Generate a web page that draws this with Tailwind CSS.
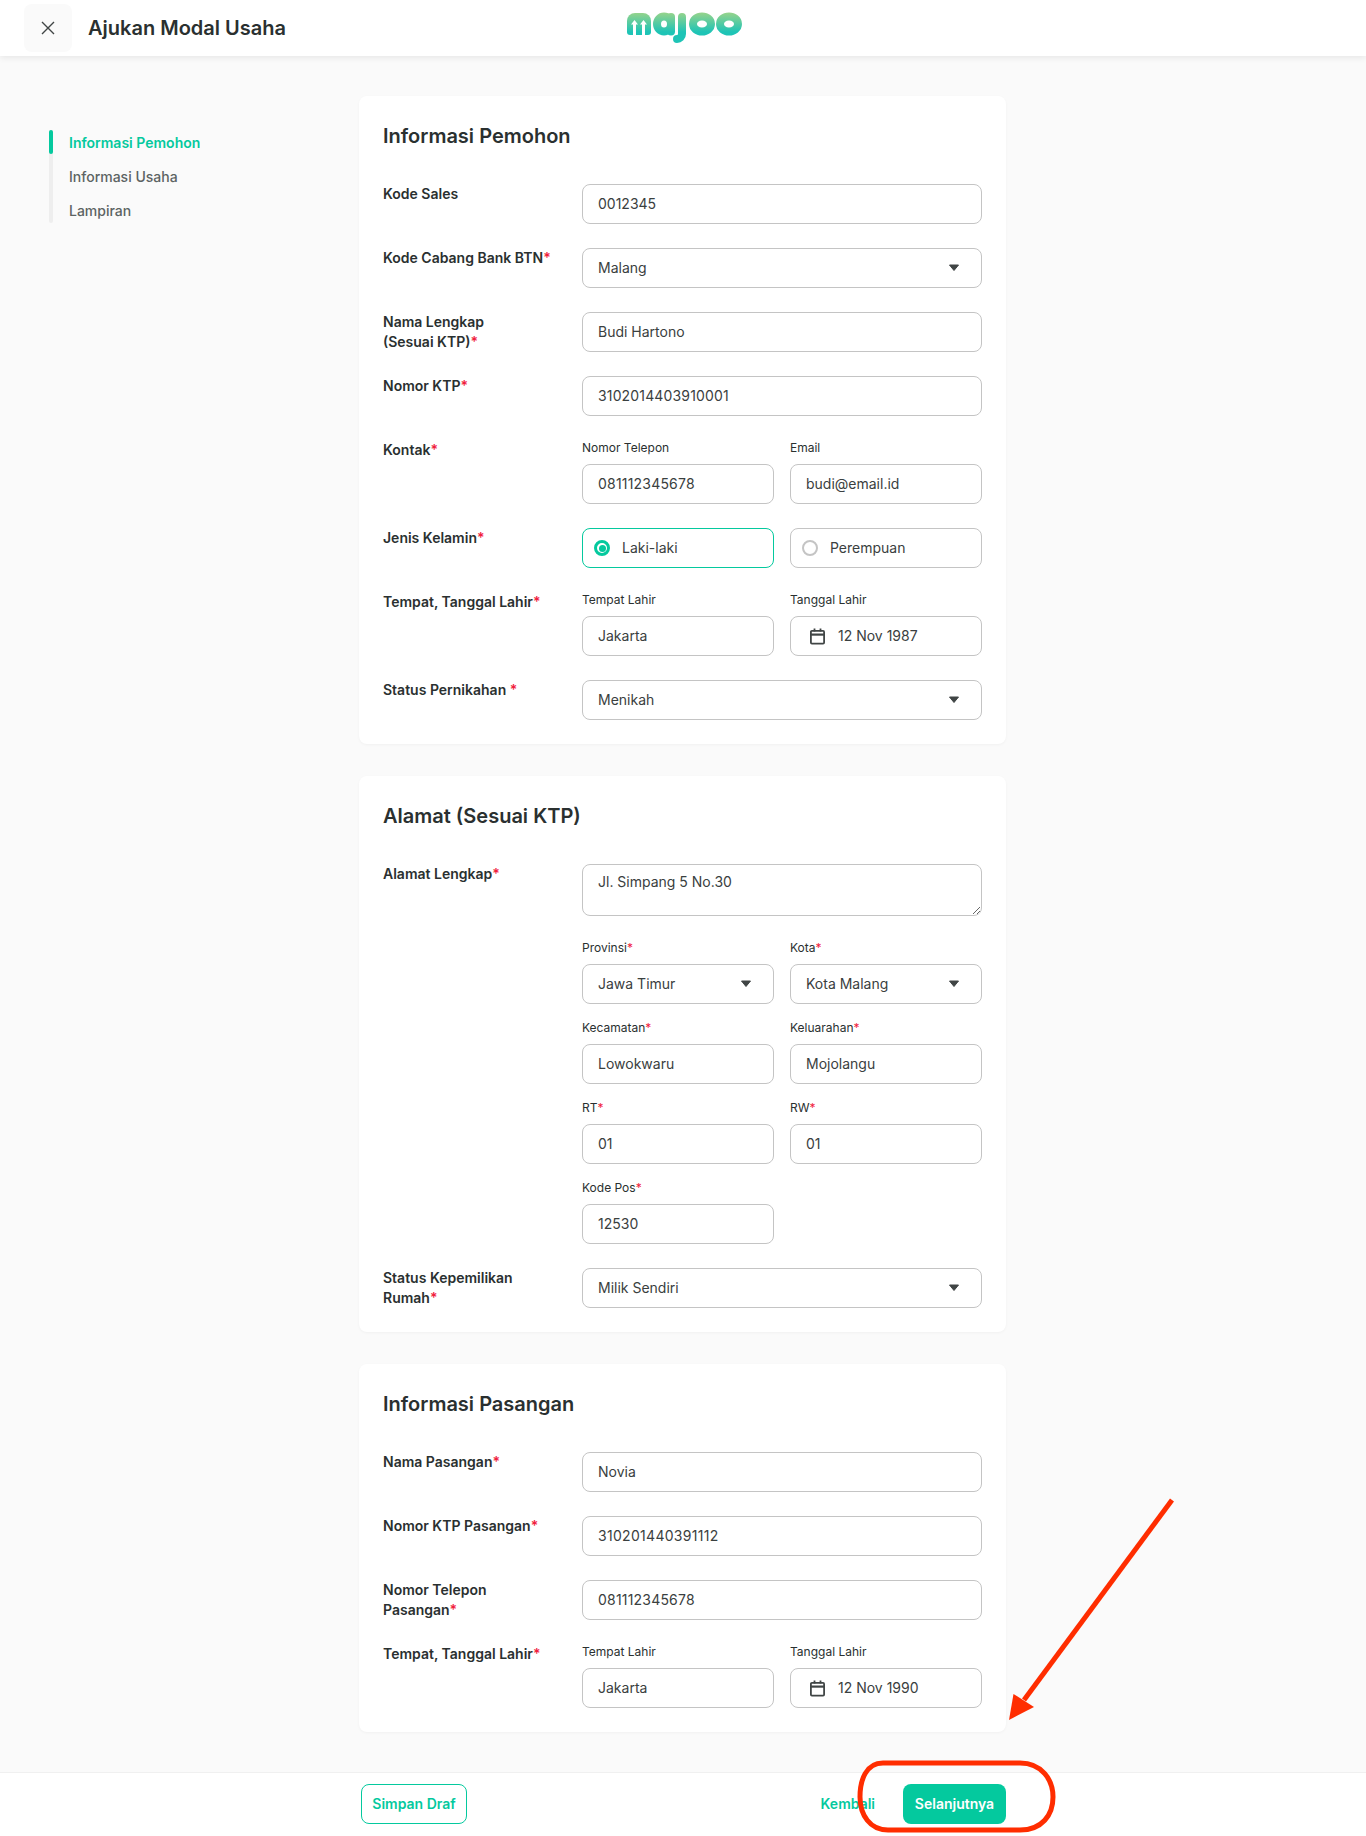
<!DOCTYPE html>
<html lang="id">
<head>
  <meta charset="UTF-8">
  <meta name="viewport" content="width=device-width, initial-scale=1.0">
  <title>Ajukan Modal Usaha</title>
  <script src="https://cdn.jsdelivr.net/npm/@tailwindcss/browser@4"></script>
</head>
<body class="relative bg-[#fafafa] text-[#2a3030] [font-family:Inter,sans-serif]">

  <header class="h-14 bg-white shadow-[0_2px_6px_rgba(0,0,0,0.08)] flex">
    <div class="w-[626px] shrink-0 pl-6 pt-1 flex items-start gap-4">
      <button class="w-12 h-12 rounded-lg bg-[#fafafa] flex items-center justify-center">
        <svg width="14" height="14" viewBox="0 0 14 14" fill="none" stroke="#404545" stroke-width="1.4"><path d="M1 1l12 12M13 1L1 13"/></svg>
      </button>
      <h1 class="text-xl font-semibold leading-12">Ajukan Modal Usaha</h1>
    </div>
    <svg class="mt-3" width="116" height="33" viewBox="0 0 116 33">
      <defs>
        <linearGradient id="logoGrad" gradientUnits="userSpaceOnUse" x1="0" y1="1" x2="0" y2="20">
          <stop offset="0" stop-color="#94d38c"/>
          <stop offset="1" stop-color="#1ec4b6"/>
        </linearGradient>
      </defs>
      <path d="M1 9a8 8 0 0 1 8-8h8a8 8 0 0 1 8 8v11a3 3 0 0 1-3 3H4a3 3 0 0 1-3-3z" fill="url(#logoGrad)"/>
      <g fill="#fff">
        <path d="M8.500 8l3.500 4.500h-2V24h-3V12.500H5z"/>
        <path d="M17.500 8l3.500 4.500h-2V24h-3V12.500h-2z"/>
      </g>
      <g fill="none" stroke="url(#logoGrad)" stroke-width="8" stroke-linecap="round">
        <ellipse cx="38" cy="12" rx="7" ry="7.500"/>
        <path d="M45 5v14.500"/>
        <path d="M56 5V22a5 5 0 0 1-5 5"/>
        <ellipse cx="76" cy="12" rx="9" ry="7.500"/>
        <ellipse cx="103" cy="12" rx="9" ry="7.500"/>
      </g>
    </svg>
  </header>

  <main class="flex pt-10 pb-10">
    <aside class="w-[359px] shrink-0 pl-[49px] pt-[34px]">
      <div class="flex gap-4">
        <div class="w-1 rounded-full bg-[#eeeeee]">
          <div class="h-6 rounded-full bg-[#04c99e]"></div>
        </div>
        <ul class="mt-px flex flex-col gap-[10px] text-sm font-medium leading-6 text-[#5c6363]">
          <li class="font-semibold text-[#04c99e]">Informasi Pemohon</li>
          <li>Informasi Usaha</li>
          <li>Lampiran</li>
        </ul>
      </div>
    </aside>

    <div class="w-[647px] flex flex-col gap-8">

      <section class="bg-white rounded-lg shadow-[0_1px_3px_rgba(0,0,0,0.04)] p-6">
        <h2 class="text-xl font-semibold leading-8 mb-8">Informasi Pemohon</h2>
        <div class="flex flex-col gap-6 text-sm">
          <div class="flex">
            <label class="w-[199px] shrink-0 font-semibold">Kode Sales</label>
            <input class="w-[400px] h-10 pl-[15px] pr-4 pb-0.5 rounded-lg border border-[#c4c4c4] bg-white text-[#3a4040]" value="0012345">
          </div>
          <div class="flex">
            <label class="w-[199px] shrink-0 font-semibold">Kode Cabang Bank BTN<span class="text-[#f0203c]">*</span></label>
            <div class="w-[400px] h-10 pl-[15px] pr-4 rounded-lg border border-[#c4c4c4] bg-white text-[#3a4040] flex items-center justify-between">Malang
              <svg class="mr-[5px]" width="12" height="8" viewBox="0 0 12 8"><path d="M1.500 1h9L6 6.500z" fill="#404545" stroke="#404545" stroke-linejoin="round"/></svg>
            </div>
          </div>
          <div class="flex">
            <label class="w-[199px] shrink-0 font-semibold">Nama Lengkap<br>(Sesuai KTP)<span class="text-[#f0203c]">*</span></label>
            <input class="w-[400px] h-10 pl-[15px] pr-4 pb-0.5 rounded-lg border border-[#c4c4c4] bg-white text-[#3a4040]" value="Budi Hartono">
          </div>
          <div class="flex">
            <label class="w-[199px] shrink-0 font-semibold">Nomor KTP<span class="text-[#f0203c]">*</span></label>
            <input class="w-[400px] h-10 pl-[15px] pr-4 pb-0.5 rounded-lg border border-[#c4c4c4] bg-white text-[#3a4040] tracking-[0.15px]" value="3102014403910001">
          </div>
          <div class="flex">
            <label class="w-[199px] shrink-0 font-semibold">Kontak<span class="text-[#f0203c]">*</span></label>
            <div class="w-[400px] grid grid-cols-2 gap-x-4">
              <div>
                <p class="text-xs leading-4 mb-2">Nomor Telepon</p>
                <input class="w-full h-10 pl-[15px] pr-4 pb-0.5 rounded-lg border border-[#c4c4c4] bg-white text-[#3a4040] tracking-[0.2px]" value="081112345678">
              </div>
              <div>
                <p class="text-xs leading-4 mb-2">Email</p>
                <input class="w-full h-10 pl-[15px] pr-4 pb-0.5 rounded-lg border border-[#c4c4c4] bg-white text-[#3a4040]" value="budi@email.id">
              </div>
            </div>
          </div>
          <div class="flex">
            <label class="w-[199px] shrink-0 font-semibold">Jenis Kelamin<span class="text-[#f0203c]">*</span></label>
            <div class="w-[400px] grid grid-cols-2 gap-x-4 text-[#3a4040]">
              <div class="h-10 px-[11px] rounded-lg border border-[#04c99e] bg-white flex items-center gap-3">
                <span class="w-4 h-4 rounded-full border-[3px] border-[#04c99e] flex items-center justify-center"><span class="w-[7px] h-[7px] rounded-full bg-[#04c99e]"></span></span>
                Laki-laki
              </div>
              <div class="h-10 px-[11px] rounded-lg border border-[#c4c4c4] bg-white flex items-center gap-3">
                <span class="w-4 h-4 rounded-full border-2 border-[#c4c4c4]"></span>
                Perempuan
              </div>
            </div>
          </div>
          <div class="flex">
            <label class="w-[199px] shrink-0 font-semibold">Tempat, Tanggal Lahir<span class="text-[#f0203c]">*</span></label>
            <div class="w-[400px] grid grid-cols-2 gap-x-4">
              <div>
                <p class="text-xs leading-4 mb-2">Tempat Lahir</p>
                <input class="w-full h-10 pl-[15px] pr-4 pb-0.5 rounded-lg border border-[#c4c4c4] bg-white text-[#3a4040]" value="Jakarta">
              </div>
              <div>
                <p class="text-xs leading-4 mb-2">Tanggal Lahir</p>
                <div class="h-10 pl-[18px] rounded-lg border border-[#c4c4c4] bg-white text-[#3a4040] flex items-center gap-3">
                  <svg width="17" height="17" viewBox="0 0 17 17" fill="none" stroke="#404545" stroke-width="1.800"><rect x="1.900" y="2.900" width="13.200" height="12.700" rx="1"/><path d="M1.900 6.600h13.200" stroke-width="2.200"/><path d="M5.500 0.500v3M11.500 0.500v3"/></svg>
                  12 Nov 1987
                </div>
              </div>
            </div>
          </div>
          <div class="flex">
            <label class="w-[199px] shrink-0 font-semibold">Status Pernikahan <span class="text-[#f0203c]">*</span></label>
            <div class="w-[400px] h-10 pl-[15px] pr-4 rounded-lg border border-[#c4c4c4] bg-white text-[#3a4040] flex items-center justify-between">Menikah
              <svg class="mr-[5px]" width="12" height="8" viewBox="0 0 12 8"><path d="M1.500 1h9L6 6.500z" fill="#404545" stroke="#404545" stroke-linejoin="round"/></svg>
            </div>
          </div>
        </div>
      </section>

      <section class="bg-white rounded-lg shadow-[0_1px_3px_rgba(0,0,0,0.04)] p-6">
        <h2 class="text-xl font-semibold leading-8 mb-8">Alamat (Sesuai KTP)</h2>
        <div class="flex flex-col gap-6 text-sm">
          <div class="flex">
            <label class="w-[199px] shrink-0 font-semibold">Alamat Lengkap<span class="text-[#f0203c]">*</span></label>
            <textarea class="w-[400px] h-[52px] pl-[15px] pr-4 pt-[7px] rounded-lg border border-[#c4c4c4] bg-white text-[#3a4040] block">Jl. Simpang 5 No.30</textarea>
          </div>
          <div class="ml-[199px] w-[400px] grid grid-cols-2 gap-x-4 gap-y-4">
            <div>
              <p class="text-xs leading-4 mb-2">Provinsi<span class="text-[#f0203c]">*</span></p>
              <div class="h-10 pl-[15px] pr-4 rounded-lg border border-[#c4c4c4] bg-white text-[#3a4040] flex items-center justify-between">Jawa Timur
                <svg class="mr-[5px]" width="12" height="8" viewBox="0 0 12 8"><path d="M1.500 1h9L6 6.500z" fill="#404545" stroke="#404545" stroke-linejoin="round"/></svg>
              </div>
            </div>
            <div>
              <p class="text-xs leading-4 mb-2">Kota<span class="text-[#f0203c]">*</span></p>
              <div class="h-10 pl-[15px] pr-4 rounded-lg border border-[#c4c4c4] bg-white text-[#3a4040] flex items-center justify-between">Kota Malang
                <svg class="mr-[5px]" width="12" height="8" viewBox="0 0 12 8"><path d="M1.500 1h9L6 6.500z" fill="#404545" stroke="#404545" stroke-linejoin="round"/></svg>
              </div>
            </div>
            <div>
              <p class="text-xs leading-4 mb-2">Kecamatan<span class="text-[#f0203c]">*</span></p>
              <input class="w-full h-10 pl-[15px] pr-4 pb-0.5 rounded-lg border border-[#c4c4c4] bg-white text-[#3a4040]" value="Lowokwaru">
            </div>
            <div>
              <p class="text-xs leading-4 mb-2">Keluarahan<span class="text-[#f0203c]">*</span></p>
              <input class="w-full h-10 pl-[15px] pr-4 pb-0.5 rounded-lg border border-[#c4c4c4] bg-white text-[#3a4040]" value="Mojolangu">
            </div>
            <div>
              <p class="text-xs leading-4 mb-2">RT<span class="text-[#f0203c]">*</span></p>
              <input class="w-full h-10 pl-[15px] pr-4 pb-0.5 rounded-lg border border-[#c4c4c4] bg-white text-[#3a4040]" value="01">
            </div>
            <div>
              <p class="text-xs leading-4 mb-2">RW<span class="text-[#f0203c]">*</span></p>
              <input class="w-full h-10 pl-[15px] pr-4 pb-0.5 rounded-lg border border-[#c4c4c4] bg-white text-[#3a4040]" value="01">
            </div>
            <div>
              <p class="text-xs leading-4 mb-2">Kode Pos<span class="text-[#f0203c]">*</span></p>
              <input class="w-full h-10 pl-[15px] pr-4 pb-0.5 rounded-lg border border-[#c4c4c4] bg-white text-[#3a4040]" value="12530">
            </div>
          </div>
          <div class="flex">
            <label class="w-[199px] shrink-0 font-semibold">Status Kepemilikan<br>Rumah<span class="text-[#f0203c]">*</span></label>
            <div class="w-[400px] h-10 pl-[15px] pr-4 rounded-lg border border-[#c4c4c4] bg-white text-[#3a4040] flex items-center justify-between">Milik Sendiri
              <svg class="mr-[5px]" width="12" height="8" viewBox="0 0 12 8"><path d="M1.500 1h9L6 6.500z" fill="#404545" stroke="#404545" stroke-linejoin="round"/></svg>
            </div>
          </div>
        </div>
      </section>

      <section class="bg-white rounded-lg shadow-[0_1px_3px_rgba(0,0,0,0.04)] p-6">
        <h2 class="text-xl font-semibold leading-8 mb-8">Informasi Pasangan</h2>
        <div class="flex flex-col gap-6 text-sm">
          <div class="flex">
            <label class="w-[199px] shrink-0 font-semibold">Nama Pasangan<span class="text-[#f0203c]">*</span></label>
            <input class="w-[400px] h-10 pl-[15px] pr-4 pb-0.5 rounded-lg border border-[#c4c4c4] bg-white text-[#3a4040]" value="Novia">
          </div>
          <div class="flex">
            <label class="w-[199px] shrink-0 font-semibold">Nomor KTP Pasangan<span class="text-[#f0203c]">*</span></label>
            <input class="w-[400px] h-10 pl-[15px] pr-4 pb-0.5 rounded-lg border border-[#c4c4c4] bg-white text-[#3a4040] tracking-[0.3px]" value="310201440391112">
          </div>
          <div class="flex">
            <label class="w-[199px] shrink-0 font-semibold">Nomor Telepon<br>Pasangan<span class="text-[#f0203c]">*</span></label>
            <input class="w-[400px] h-10 pl-[15px] pr-4 pb-0.5 rounded-lg border border-[#c4c4c4] bg-white text-[#3a4040] tracking-[0.2px]" value="081112345678">
          </div>
          <div class="flex">
            <label class="w-[199px] shrink-0 font-semibold">Tempat, Tanggal Lahir<span class="text-[#f0203c]">*</span></label>
            <div class="w-[400px] grid grid-cols-2 gap-x-4">
              <div>
                <p class="text-xs leading-4 mb-2">Tempat Lahir</p>
                <input class="w-full h-10 pl-[15px] pr-4 pb-0.5 rounded-lg border border-[#c4c4c4] bg-white text-[#3a4040]" value="Jakarta">
              </div>
              <div>
                <p class="text-xs leading-4 mb-2">Tanggal Lahir</p>
                <div class="h-10 pl-[18px] rounded-lg border border-[#c4c4c4] bg-white text-[#3a4040] flex items-center gap-3">
                  <svg width="17" height="17" viewBox="0 0 17 17" fill="none" stroke="#404545" stroke-width="1.800"><rect x="1.900" y="2.900" width="13.200" height="12.700" rx="1"/><path d="M1.900 6.600h13.200" stroke-width="2.200"/><path d="M5.500 0.500v3M11.500 0.500v3"/></svg>
                  12 Nov 1990
                </div>
              </div>
            </div>
          </div>
        </div>
      </section>
    </div>
  </main>

  <footer class="h-16 bg-white border-t border-[#f0f0f0] pl-[361px] pt-[11px] text-sm font-semibold">
    <div class="w-[645px] flex items-center justify-between">
      <button class="h-10 w-[106px] rounded-lg border border-[#04c99e] text-[#04c99e]">Simpan Draf</button>
      <div class="flex items-center gap-7">
        <button class="text-[#04c99e]">Kembali</button>
        <button class="h-10 w-[103px] rounded-lg bg-[#04c99e] text-white">Selanjutnya</button>
      </div>
    </div>
  </footer>

  <!-- red annotation drawn on top of the screenshot -->
  <svg class="absolute top-0 left-0 pointer-events-none" width="1366" height="1836" viewBox="0 0 1366 1836" fill="none">
    <path d="M1172 1500L1024 1700" stroke="#ff2d00" stroke-width="5"/>
    <path d="M1009 1720L1013.500 1694L1034 1707z" fill="#ff2d00"/>
    <path d="M883 1763H1020C1042 1763 1053 1780 1053 1797C1053 1815 1042 1830 1020 1830H888C870 1830 860 1815 860 1797C860 1780 866 1763 883 1763z" stroke="#ff2d00" stroke-width="5"/>
  </svg>
</body>
</html>
